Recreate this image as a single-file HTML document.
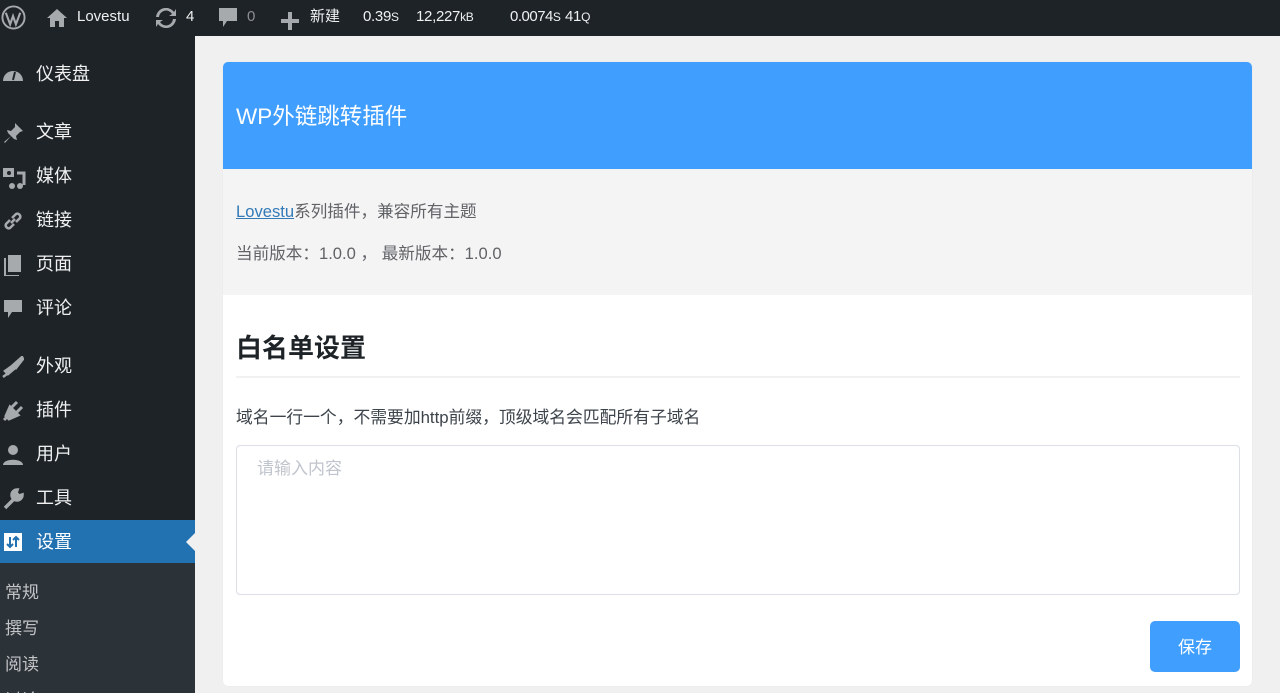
<!DOCTYPE html>
<html style="overflow:hidden"><head><meta charset="utf-8"><style>
*{margin:0;padding:0;box-sizing:border-box}
body{width:1280px;height:693px;overflow:hidden;background:#f0f0f1;font-family:"Liberation Sans","Noto Sans CJK SC",sans-serif;position:relative}
#bar{position:absolute;left:0;top:0;width:1280px;height:36px;background:#1d2327;color:#f0f0f1;font-size:15px}
#bar .i{position:absolute;top:0;height:36px;line-height:34px;white-space:nowrap}
#bar small{font-size:12px}
#side{position:absolute;left:0;top:36px;width:195px;height:657px;background:#1d2327;overflow:hidden}
.m{position:absolute;left:0;width:195px;height:44px;color:#f0f0f1;font-size:18px;line-height:44px}
.m span{position:absolute;left:36px}
.m svg{position:absolute;left:2px;top:12px}
#sub{position:absolute;left:0;width:195px;height:130px;background:#2c3338}
.s{position:absolute;left:5px;color:#c3c4c7;font-size:17px}
#card{position:absolute;left:223px;top:62px;width:1029px;height:624px;background:#fff;border-radius:5px;overflow:hidden;box-shadow:0 0 1px #ddd}
#hd{height:107px;background:#409eff;color:#fff;font-size:22.5px;padding:37px 0 0 13px}
#info{height:126px;background:#f4f4f5;padding:29px 13px;color:#606266;font-size:16.6px}
#info a{color:#337ab7;text-decoration:underline}
h2{position:absolute;left:13px;top:266px;font-size:26px;color:#1d2327;font-weight:bold}
#hr{position:absolute;left:13px;right:12px;top:314px;height:2px;background:#f1f1f1}
#tip{position:absolute;left:13px;top:342px;font-size:16.8px;color:#3c434a}
#ta{position:absolute;left:13px;top:383px;width:1004px;height:150px;border:1px solid #dcdfe6;border-radius:4px;color:#c0c4cc;font-size:17px;padding:8px 20px}
#btn{position:absolute;left:927px;top:559px;width:90px;height:51px;background:#409eff;border-radius:5px;color:#fff;font-size:17px;text-align:center;line-height:53px}
</style></head><body>
<div id="bar">
<div class="i" style="left:1px;top:5px;height:26px"><svg width="25" height="25" viewBox="0 0 26 26"><circle cx="13" cy="13" r="11.5" fill="none" stroke="#a7aaad" stroke-width="2"/><path d="M5 8l4.5 12 3-8.5 3 8.5 4.5-12" fill="none" stroke="#a7aaad" stroke-width="2.2"/></svg></div>
<div class="i" style="left:46px;top:7px;height:22px"><svg width="22" height="20" viewBox="0 0 22 20"><path d="M11 1L1 10h3v9h5v-6h4v6h5v-9h3z" fill="#a7aaad"/></svg></div>
<div class="i" style="left:77px">Lovestu</div>
<div class="i" style="left:155px;top:7px;height:22px"><svg width="22" height="20" viewBox="0 0 22 20"><path d="M4 9a7 7 0 0 1 13-3l-3 2h7V1l-2 3A10 10 0 0 0 1 9zM18 11a7 7 0 0 1-13 3l3-2H1v7l2-3a10 10 0 0 0 18-5z" fill="#a7aaad"/></svg></div>
<div class="i" style="left:186px">4</div>
<div class="i" style="left:218px;top:7px;height:24px"><svg width="20" height="22" viewBox="0 0 20 22"><path d="M1 1h18v13H9l-4 6v-6H1z" fill="#a7aaad"/></svg></div>
<div class="i" style="left:247px;color:#8c8f94">0</div>
<div class="i" style="left:281px;top:9px;height:18px"><svg width="18" height="18"><path d="M7 0h4v7h7v4h-7v7H7v-7H0V7h7z" fill="#a7aaad"/></svg></div>
<div class="i" style="left:310px">新建</div>
<div class="i" style="left:363px;letter-spacing:-0.3px">0.39<small>S</small></div>
<div class="i" style="left:416px;letter-spacing:-0.3px">12,227<small>kB</small></div>
<div class="i" style="left:510px;letter-spacing:-0.5px">0.0074<small>S</small></div>
<div class="i" style="left:565px;letter-spacing:-0.3px">41<small>Q</small></div>
</div>
<div id="side">
<div class="m" style="top:16px"><svg width="22" height="20"><path d="M1 17a10 10 0 1 1 20 0z" fill="#a7aaad"/><path d="M11 16l2-8" stroke="#1d2327" stroke-width="2"/></svg><span>仪表盘</span></div>
<div class="m" style="top:74px"><svg width="22" height="22"><path d="M13 1l8 8-3 1-4 4 1 4-3-1-3-3-6 7-1-1 7-6-3-3-1-3 4 1 4-4z" fill="#a7aaad"/></svg><span>文章</span></div>
<div class="m" style="top:118px"><svg width="24" height="24"><rect x="1" y="2" width="11" height="9" fill="#a7aaad"/><circle cx="7" cy="7" r="2" fill="#1d2327"/><path d="M15 7h7v12" stroke="#a7aaad" stroke-width="3" fill="none"/><circle cx="18" cy="20" r="3" fill="#a7aaad"/><circle cx="10" cy="20" r="3" fill="#a7aaad"/></svg><span>媒体</span></div>
<div class="m" style="top:162px"><svg width="22" height="22"><path d="M9 13l4-4M8 10l-4 4a3 3 0 0 0 4 4l4-4M14 12l4-4a3 3 0 0 0-4-4l-4 4" stroke="#a7aaad" stroke-width="2.5" fill="none"/></svg><span>链接</span></div>
<div class="m" style="top:206px"><svg width="22" height="22"><rect x="6" y="1" width="13" height="17" fill="#a7aaad"/><path d="M3 4v18h14" stroke="#a7aaad" stroke-width="2" fill="none"/></svg><span>页面</span></div>
<div class="m" style="top:250px"><svg width="22" height="22"><path d="M2 2h18v12H10l-4 6v-6H2z" fill="#a7aaad"/></svg><span>评论</span></div>
<div class="m" style="top:308px"><svg width="22" height="22"><path d="M20 1l-9 8 3 3 7-9zM10 10l-7 5 3 3 6-5zM1 21l4-3" stroke="#a7aaad" stroke-width="2.5" fill="#a7aaad"/></svg><span>外观</span></div>
<div class="m" style="top:352px"><svg width="22" height="22"><path d="M4 16l4-9 8 8-9 4zM10 7l5-5M15 12l5-5M2 20l4-4" stroke="#a7aaad" stroke-width="3" fill="#a7aaad"/></svg><span>插件</span></div>
<div class="m" style="top:396px"><svg width="22" height="22"><circle cx="11" cy="6" r="5" fill="#a7aaad"/><path d="M1 21c0-7 20-7 20 0z" fill="#a7aaad"/></svg><span>用户</span></div>
<div class="m" style="top:440px"><svg width="22" height="22"><path d="M3 20L13 10M15 2a5 5 0 1 0 5 5l-3 1-3-3z" stroke="#a7aaad" stroke-width="3.5" fill="#a7aaad"/></svg><span>工具</span></div>
<div class="m" style="top:484px;background:#2271b1"><svg width="22" height="22"><rect x="2" y="1" width="18" height="18" fill="#fff"/><path d="M8 5v10M5 12l3 3 3-3M14 15V5M11 8l3-3 3 3" stroke="#2271b1" stroke-width="2" fill="none"/></svg><span style="color:#fff">设置</span><div style="position:absolute;right:0;top:13px;width:0;height:0;border:9px solid transparent;border-right-color:#f0f0f1"></div></div>
<div id="sub" style="top:527px"><div class="s" style="top:15px">常规</div><div class="s" style="top:51px">撰写</div><div class="s" style="top:87px">阅读</div><div class="s" style="top:123px">讨论</div></div>
</div>
<div id="card">
<div id="hd">WP外链跳转插件</div>
<div id="info"><div><a>Lovestu</a>系列插件，兼容所有主题</div><div style="margin-top:18px">当前版本：1.0.0 ，&nbsp;最新版本：1.0.0</div></div>
<h2>白名单设置</h2>
<div id="hr"></div>
<div id="tip">域名一行一个，不需要加http前缀，顶级域名会匹配所有子域名</div>
<div id="ta">请输入内容</div>
<div id="btn">保存</div>
</div>
</body></html>
